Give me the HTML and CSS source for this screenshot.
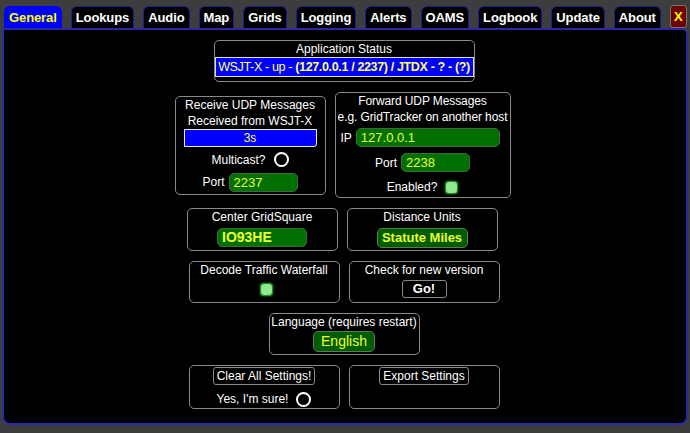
FILE: index.html
```html
<!DOCTYPE html>
<html lang="en">
<head>
<title>GridTracker Settings</title>
<link rel="stylesheet" href="styles.css">
</head>
<body>

<div class="tabs">
    <div class="tab active">General</div>
    <div class="tab">Lookups</div>
    <div class="tab">Audio</div>
    <div class="tab">Map</div>
    <div class="tab">Grids</div>
    <div class="tab">Logging</div>
    <div class="tab">Alerts</div>
    <div class="tab">OAMS</div>
    <div class="tab">Logbook</div>
    <div class="tab">Update</div>
    <div class="tab">About</div>
    <div class="close">X</div>
</div>

<div class="panel">
    <div class="row">
        <div class="box status-box">
            <div class="title">Application Status</div>
            <div class="status">WSJT-X - up - <b>(127.0.0.1 / 2237) / JTDX - ? - (?)</b></div>
        </div>
    </div>

    <div class="row middle">
        <div class="box receive">
            <div class="title">Receive UDP Messages</div>
            <div class="title">Received from WSJT-X</div>
            <div class="timer">3s</div>
            <div class="line">Multicast? <span class="radio"></span></div>
            <div class="line">Port <span class="input port">2237</span></div>
        </div>
        <div class="box forward">
            <div class="title">Forward UDP Messages</div>
            <div class="title">e.g. GridTracker on another host</div>
            <div class="line ip">IP <span class="input ip-input">127.0.0.1</span></div>
            <div class="line">Port <span class="input port">2238</span></div>
            <div class="line">Enabled? <span class="check"></span></div>
        </div>
    </div>

    <div class="row shifted">
        <div class="box h43">
            <div class="title">Center GridSquare</div>
            <div class="line"><span class="input grid">IO93HE</span></div>
        </div>
        <div class="box h43">
            <div class="title">Distance Units</div>
            <div class="line"><span class="select units">Statute Miles</span></div>
        </div>
    </div>

    <div class="row">
        <div class="box h42">
            <div class="title">Decode Traffic Waterfall</div>
            <div class="line tight"><span class="check"></span></div>
        </div>
        <div class="box h42">
            <div class="title">Check for new version</div>
            <div class="line tight"><span class="button go">Go!</span></div>
        </div>
    </div>

    <div class="row">
        <div class="box h42">
            <div class="title">Language (requires restart)</div>
            <div class="line tighter"><span class="select lang">English</span></div>
        </div>
    </div>

    <div class="row">
        <div class="box tall">
            <div class="line top"><span class="button">Clear All Settings!</span></div>
            <div class="line sure">Yes, I'm sure! <span class="radio"></span></div>
        </div>
        <div class="box tall">
            <div class="line top"><span class="button">Export Settings</span></div>
        </div>
    </div>
</div>

</body>
</html>
```

FILE: styles.css
```css
body {
    background-color: #3d3d3d;
    font-family: "Liberation Sans", Arial, sans-serif;
    color: #fff;
    margin: 0;
    height: 433px;
    overflow: hidden;
}
.tabs {
    display: flex;
    align-items: flex-end;
    gap: 9px;
    padding: 6px 3px 0 4px;
    height: 22px;
}
.tab {
    background-color: #000;
    border: 1px solid #1c1c96;
    border-bottom: none;
    border-radius: 6px 6px 0 0;
    font-size: 13px;
    font-weight: bold;
    letter-spacing: -0.1px;
    height: 21px;
    line-height: 21px;
    padding: 0 4px;
}
.tab.active {
    background-color: #0000ff;
    color: #ffff00;
    border-color: #0000ff;
}
.close {
    margin-left: auto;
    background-color: #700000;
    color: #ffff00;
    border: 1px solid #777;
    border-radius: 3px;
    font-size: 13px;
    font-weight: bold;
    width: 20px;
    height: 21px;
    line-height: 21px;
    text-align: center;
}
.panel {
    background-color: #000;
    border: 2px solid #2a2aa6;
    border-radius: 0 6px 8px 8px;
    margin: 0 2px;
    height: 397px;
    box-sizing: border-box;
    padding: 10px 2px 0 0;
}
.row {
    display: flex;
    justify-content: center;
    gap: 9px;
    margin-bottom: 10px;
}
.row.middle {
    align-items: center;
    padding-right: 3px;
}
.row.shifted {
    padding-right: 4px;
}
.box {
    width: 151px;
    box-sizing: border-box;
    border: 1px solid #8a8a8a;
    border-radius: 5px;
    font-size: 12px;
    text-align: center;
    background-color: #000;
}
.h43 {
    height: 43px;
}
.h42 {
    height: 42px;
}
.title {
    line-height: 16px;
}
.status-box {
    width: 261px;
    height: 42px;
}
.status {
    background-color: #0000ff;
    border: 1px solid #ddd;
    color: #ffff60;
    font-size: 12.5px;
    line-height: 18px;
    white-space: nowrap;
    letter-spacing: -0.35px;
}
.status b {
    font-weight: bold;
}
.timer {
    background-color: #0000ff;
    border: 1px solid #eee;
    border-radius: 0 0 3px 0;
    color: #ffff60;
    line-height: 16px;
    margin: 0 8px;
}
.line {
    display: flex;
    justify-content: center;
    align-items: center;
    gap: 4px;
    min-height: 18px;
    margin-top: 3px;
}
.line.tight {
    margin-top: 2px;
}
.line.tighter {
    margin-top: 1px;
}
.receive {
    height: 99px;
}
.receive .line {
    margin-top: 4px;
}
.forward {
    width: 176px;
    height: 106px;
}
.forward .title {
    white-space: nowrap;
    letter-spacing: -0.1px;
}
.forward .line {
    margin-top: 6px;
}
.forward .line.ip {
    justify-content: flex-start;
    padding-left: 5px;
    margin-top: 3px;
}
.input, .select {
    display: inline-block;
    background-color: #007000;
    border: 1px solid #3a6a3a;
    border-radius: 5px;
    color: #ecff30;
    font-size: 13px;
    line-height: 17px;
    height: 17px;
    text-align: left;
    padding: 0 4px;
    box-sizing: content-box;
}
.port {
    width: 59px;
}
.ip-input {
    width: 134px;
}
.grid {
    width: 80px;
    font-weight: bold;
    font-size: 14px;
}
.select {
    background-color: #005c00;
    border-color: #5a7a5a;
    text-align: center;
    height: 18px;
    line-height: 18px;
}
.units {
    width: 81px;
    font-weight: bold;
}
.lang {
    width: 52px;
    font-size: 14px;
    height: 19px;
    line-height: 19px;
}
.radio {
    display: inline-block;
    width: 11px;
    height: 11px;
    border: 2px solid #fff;
    border-radius: 50%;
    margin-left: 4px;
}
.check {
    display: inline-block;
    width: 11px;
    height: 11px;
    background-color: #8fe88f;
    border: 1px solid #1a8a1a;
    border-radius: 4px;
    box-shadow: 0 0 2px #2aaa2a;
    margin-left: 4px;
}
.button {
    display: inline-block;
    background-color: #000;
    border: 1px solid #8a8a8a;
    border-radius: 3px;
    color: #fff;
    font-size: 12px;
    line-height: 16px;
    padding: 0 3px;
}
.go {
    font-weight: bold;
    font-size: 13px;
    width: 37px;
}
.tall {
    height: 44px;
}
.tall .line.top {
    margin-top: 1px;
}
.tall .line.sure {
    margin-top: 5px;
}
```
